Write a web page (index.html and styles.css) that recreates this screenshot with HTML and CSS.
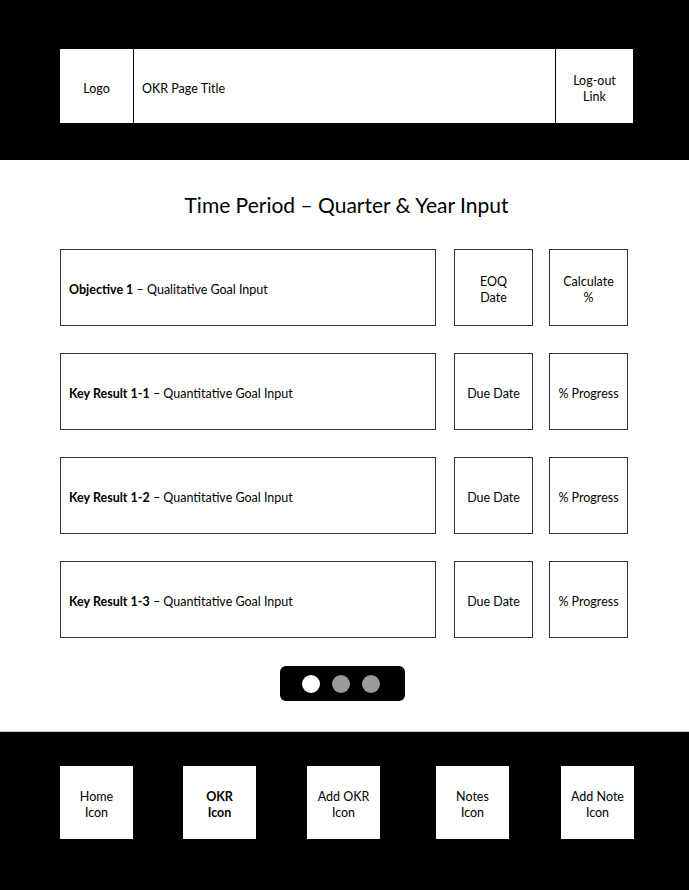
FILE: index.html
```html
<!DOCTYPE html>
<html>
<head>
<meta charset="utf-8">
<link rel="stylesheet" href="styles.css">
</head>
<body>
<header class="top">
  <div class="topbar">
    <div class="cell logo">Logo</div>
    <div class="cell title">OKR Page Title</div>
    <div class="cell logout">Log-out<br>Link</div>
  </div>
</header>
<main class="content">
  <h1 class="period">Time Period – Quarter &amp; Year Input</h1>
  <div class="rows">
    <div class="row">
      <div class="box goal"><span><b>Objective 1</b> – Qualitative Goal Input</span></div>
      <div class="box date">EOQ<br>Date</div>
      <div class="box prog">Calculate<br>%</div>
    </div>
    <div class="row">
      <div class="box goal"><span><b>Key Result 1-1</b> – Quantitative Goal Input</span></div>
      <div class="box date">Due Date</div>
      <div class="box prog">% Progress</div>
    </div>
    <div class="row">
      <div class="box goal"><span><b>Key Result 1-2</b> – Quantitative Goal Input</span></div>
      <div class="box date">Due Date</div>
      <div class="box prog">% Progress</div>
    </div>
    <div class="row">
      <div class="box goal"><span><b>Key Result 1-3</b> – Quantitative Goal Input</span></div>
      <div class="box date">Due Date</div>
      <div class="box prog">% Progress</div>
    </div>
  </div>
  <div class="pager">
    <span class="dot active"></span>
    <span class="dot"></span>
    <span class="dot"></span>
  </div>
</main>
<footer class="nav">
  <div class="navbox">Home<br>Icon</div>
  <div class="navbox bold n2">OKR<br>Icon</div>
  <div class="navbox n3">Add OKR<br>Icon</div>
  <div class="navbox n4">Notes<br>Icon</div>
  <div class="navbox n5">Add Note<br>Icon</div>
</footer>
</body>
</html>
```
FILE: styles.css
```css
html, body {
  margin: 0;
  padding: 0;
}
body {
  width: 689px;
  font-family: Lato, "Open Sans", sans-serif;
  font-size: 12.5px;
  color: #000;
  background: #fff;
}
.top {
  background: #000;
  height: 160px;
  box-sizing: border-box;
  padding-top: 49px;
  padding-left: 60px;
}
.topbar {
  display: flex;
  width: 573px;
  height: 74px;
  background: #fff;
}
.cell {
  display: flex;
  align-items: center;
  line-height: 16px;
  box-sizing: border-box;
  padding-top: 5px;
}
.logo {
  width: 74px;
  justify-content: center;
  border-right: 1px solid #000;
}
.title {
  flex: 1;
  padding-left: 8px;
}
.logout {
  width: 78px;
  justify-content: center;
  text-align: center;
  border-left: 1px solid #000;
}
.content {
  height: 572px;
  box-sizing: border-box;
  padding-top: 31px;
  border-bottom: 1px solid #ccc;
}
.period {
  margin: 0;
  font-weight: normal;
  font-size: 21px;
  line-height: 28px;
  text-align: center;
  padding-left: 4px;
}
.rows {
  margin-top: 30px;
  display: flex;
  flex-direction: column;
  gap: 27px;
  padding-left: 60px;
}
.row {
  display: flex;
  height: 77px;
}
.box {
  box-sizing: border-box;
  border: 1px solid #333;
  display: flex;
  align-items: center;
  justify-content: center;
  text-align: center;
  line-height: 16px;
  padding-top: 4px;
}
.goal {
  width: 376px;
  justify-content: flex-start;
  text-align: left;
  padding-left: 8px;
}
.goal b {
  font-weight: bold;
}
.date {
  width: 79px;
  margin-left: 18px;
}
.prog {
  width: 79px;
  margin-left: 16px;
}
.pager {
  margin: 28px auto 0;
  width: 125px;
  height: 35px;
  box-sizing: border-box;
  background: #000;
  border-radius: 6px;
  display: flex;
  align-items: center;
  padding-left: 22px;
  gap: 12px;
  position: relative;
  left: -2px;
}
.dot {
  width: 18px;
  height: 18px;
  border-radius: 50%;
  background: #9a9a9a;
}
.dot.active {
  background: #fff;
}
.nav {
  background: #000;
  height: 158px;
  box-sizing: border-box;
  padding: 34px 0 0 60px;
  display: flex;
  align-items: flex-start;
}
.navbox {
  width: 73px;
  height: 73px;
  box-sizing: border-box;
  padding-top: 4px;
  background: #fff;
  display: flex;
  align-items: center;
  justify-content: center;
  text-align: center;
  line-height: 16px;
}
.n2 { margin-left: 50px; }
.n3 { margin-left: 51px; }
.n4 { margin-left: 56px; }
.n5 { margin-left: 52px; }
.navbox.bold {
  font-weight: bold;
}
```
